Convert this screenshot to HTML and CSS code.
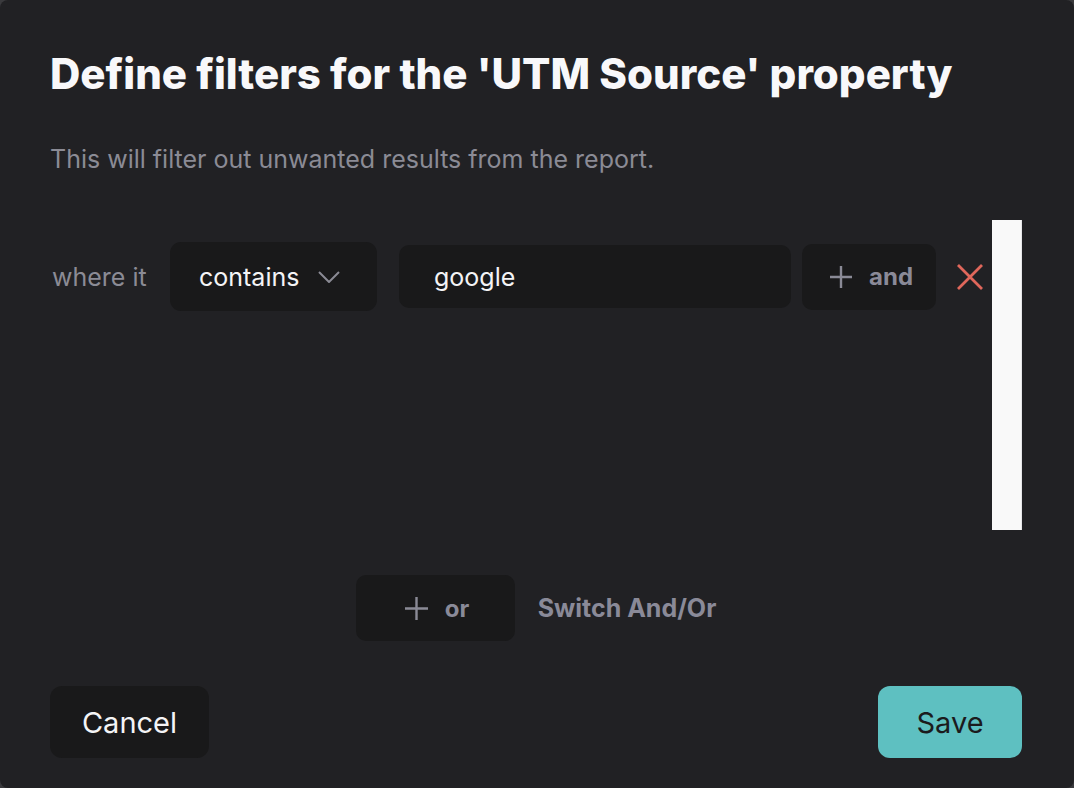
FILE: index.html
```html
<!DOCTYPE html>
<html>
<head>
<meta charset="utf-8">
<link rel="stylesheet" href="styles.css">
</head>
<body>
<div class="modal">
  <h1 class="title">Define filters for the 'UTM Source' property</h1>
  <p class="subtitle">This will filter out unwanted results from the report.</p>
  <div class="filters">
    <div class="filter-list">
      <div class="row">
        <span class="label">where it</span>
        <div class="select">
          <span>contains</span>
          <svg class="chev" width="22" height="12" viewBox="0 0 22 12"><path d="M1 1 L11 11 L21 1" fill="none" stroke="#8a8a94" stroke-width="2"/></svg>
        </div>
        <div class="input">google</div>
        <div class="btn-ghost and-btn">
          <svg class="plus" width="22" height="22" viewBox="0 0 22 22"><path d="M11 0 V22 M0 11 H22" stroke="#8a8a96" stroke-width="2.4"/></svg>
          <span>and</span>
        </div>
        <svg class="remove" width="26" height="26" viewBox="0 0 26 26"><path d="M1 1 L25 25 M25 1 L1 25" stroke="#e0675b" stroke-width="2.8"/></svg>
      </div>
    </div>
    <div class="scrollbar"></div>
  </div>
  <div class="or-row">
    <div class="btn-ghost or-btn">
      <svg class="plus" width="23" height="23" viewBox="0 0 23 23"><path d="M11.5 0 V23 M0 11.5 H23" stroke="#8a8a96" stroke-width="2.4"/></svg>
      <span>or</span>
    </div>
    <span class="switch">Switch And/Or</span>
  </div>
  <div class="footer">
    <button class="cancel">Cancel</button>
    <button class="save">Save</button>
  </div>
</div>
</body>
</html>
```

FILE: styles.css
```css
html, body {
  margin: 0;
  padding: 0;
  background: #3a3a3d;
}
body {
  width: 1074px;
  height: 788px;
  overflow: hidden;
  font-family: Inter, "Noto Sans", sans-serif;
}
.modal {
  box-sizing: border-box;
  width: 1074px;
  height: 788px;
  background: #212124;
  border-radius: 8px;
  padding: 48px 52px 30px 50px;
  display: flex;
  flex-direction: column;
}
.title {
  margin: 0;
  font-size: 42px;
  font-weight: 800;
  color: #f8f8fa;
  letter-spacing: 0;
  line-height: 52px;
}
.subtitle {
  margin: 44px 0 0 0;
  font-size: 25px;
  color: #8b8b95;
  line-height: 30px;
}
.filters {
  margin-top: 46px;
  display: flex;
  height: 310px;
}
.filter-list {
  flex: 1;
  padding-top: 22px;
}
.row {
  display: flex;
  align-items: center;
  height: 69px;
}
.label {
  font-size: 25px;
  color: #8b8b95;
  margin-left: 2px;
  width: 118px;
}
.select {
  box-sizing: border-box;
  width: 207px;
  height: 69px;
  background: #19191a;
  border-radius: 11px;
  display: flex;
  align-items: center;
  padding-left: 29px;
  font-size: 25px;
  color: #f4f4f6;
}
.select .chev {
  margin-left: 19px;
}
.input {
  box-sizing: border-box;
  width: 392px;
  height: 63px;
  margin-left: 22px;
  background: #19191a;
  border-radius: 10px;
  display: flex;
  align-items: center;
  padding-left: 35px;
  font-size: 25px;
  color: #f4f4f6;
}
.btn-ghost {
  box-sizing: border-box;
  background: #19191a;
  border-radius: 10px;
  display: flex;
  align-items: center;
  font-size: 24px;
  font-weight: 700;
  color: #8a8a98;
}
.and-btn {
  width: 134px;
  height: 66px;
  margin-left: 11px;
  padding-left: 28px;
}
.and-btn .plus {
  margin-right: 17px;
}
.remove {
  margin-left: 21px;
}
.scrollbar {
  width: 30px;
  height: 310px;
  background: #f9f9f9;
  border-right: 1px solid #e6e6e8;
  box-sizing: border-box;
  margin-left: 9px;
}
.or-row {
  margin-top: 45px;
  display: flex;
  align-items: center;
  justify-content: center;
}
.or-btn {
  width: 159px;
  height: 66px;
  padding-left: 49px;
}
.or-btn .plus {
  margin-right: 17px;
}
.switch {
  margin-left: 23px;
  font-size: 25px;
  font-weight: 700;
  color: #8a8a98;
}
.footer {
  margin-top: auto;
  display: flex;
  justify-content: space-between;
}
.footer button {
  font-family: Inter, "Noto Sans", sans-serif;
  border: none;
  height: 72px;
  border-radius: 12px;
  font-size: 29px;
  padding: 0;
}
.cancel {
  width: 159px;
  background: #19191a;
  color: #f4f4f6;
}
.save {
  width: 144px;
  background: #5ec0c1;
  color: #1b1b1d;
}
```
